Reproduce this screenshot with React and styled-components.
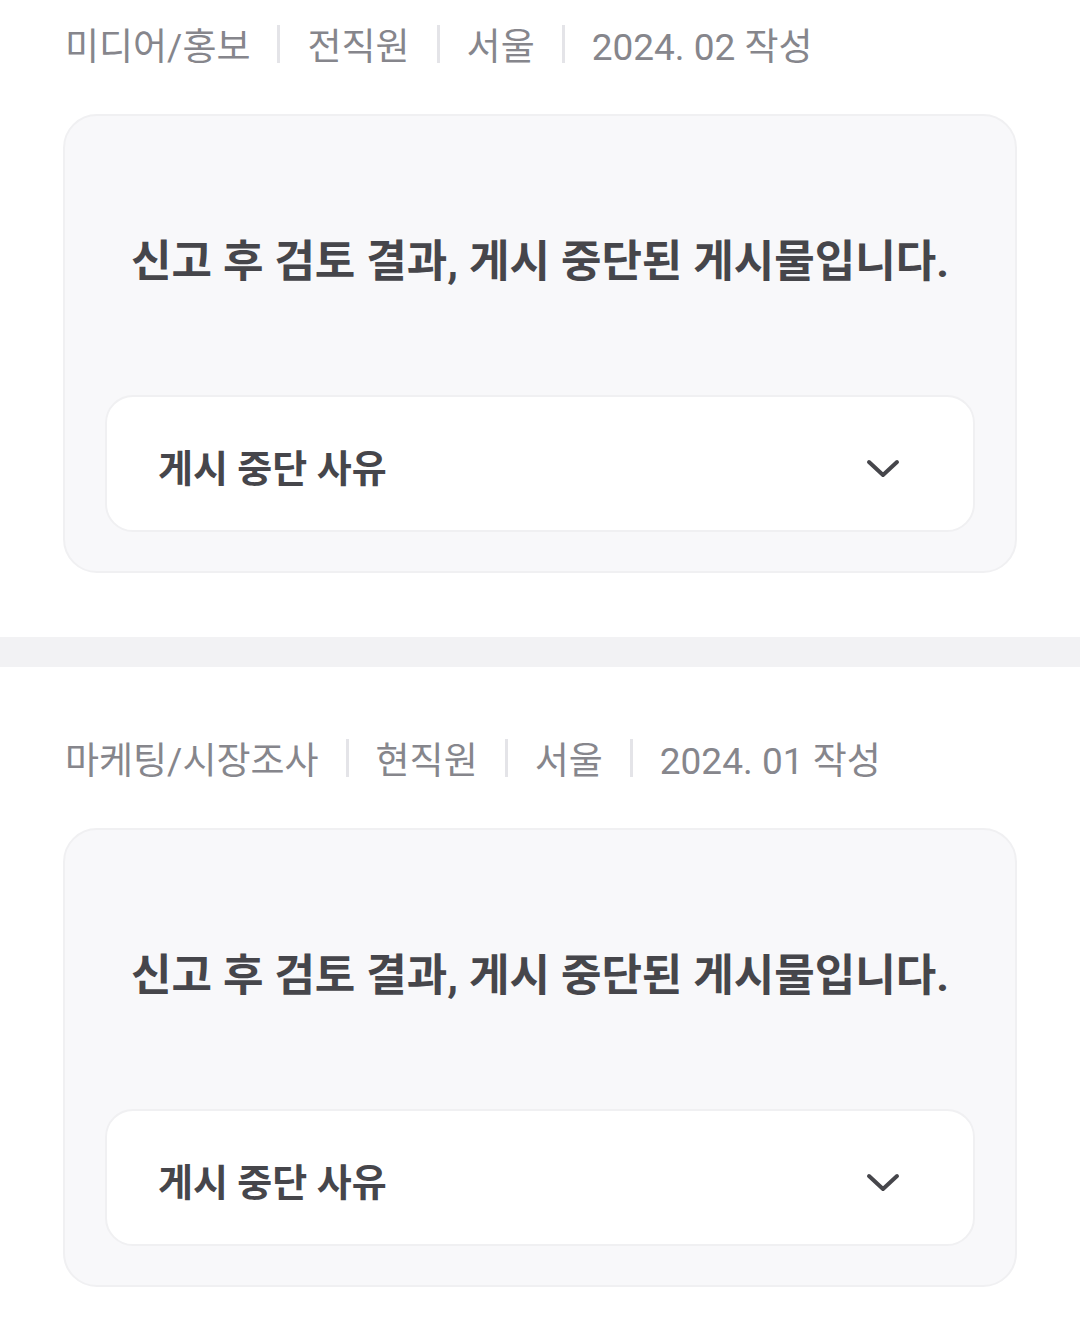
import React from 'react';
import styled, { createGlobalStyle } from 'styled-components';

const GlobalStyle = createGlobalStyle`
  body {
    margin: 0;
    background: #ffffff;
    font-family: "Roboto", "Noto Sans CJK KR", sans-serif;
  }
`;

const posts = [
  { job: '미디어/홍보', status: '전직원', region: '서울', date: '2024. 02 작성' },
  { job: '마케팅/시장조사', status: '현직원', region: '서울', date: '2024. 01 작성' },
];

function Chevron() {
  return (
    <ChevronIcon width="34" height="20" viewBox="0 0 34 20" fill="none">
      <path d="M3 3 L17 16 L31 3" stroke="#46464b" strokeWidth="4" strokeLinecap="round" strokeLinejoin="round" />
    </ChevronIcon>
  );
}

function Post({ post, first }) {
  return (
    <Section $first={first}>
      <Meta>
        <span>{post.job}</span>
        <Sep />
        <span>{post.status}</span>
        <Sep />
        <span>{post.region}</span>
        <Sep />
        <span>{post.date}</span>
      </Meta>
      <Card>
        <Notice>신고 후 검토 결과, 게시 중단된 게시물입니다.</Notice>
        <Reason>
          <ReasonLabel>게시 중단 사유</ReasonLabel>
          <Chevron />
        </Reason>
      </Card>
    </Section>
  );
}

export default function App() {
  return (
    <>
      <GlobalStyle />
      <Page>
        {posts.map((p, i) => (
          <React.Fragment key={i}>
            {i > 0 && <Band />}
            <Post post={p} first={i === 0} />
          </React.Fragment>
        ))}
      </Page>
    </>
  );
}

const Page = styled.div`
  display: flex;
  flex-direction: column;
`;

const Section = styled.section`
  padding: ${(p) => (p.$first ? '19px' : '66px')} 63px 64px;
  display: flex;
  flex-direction: column;
  gap: 45px;
`;

const Meta = styled.div`
  display: flex;
  align-items: center;
  height: 50px;
  padding-left: 2px;
  font-size: 37px;
  color: #86868c;
  gap: 27px;
`;

const Sep = styled.i`
  width: 3px;
  height: 38px;
  background: #e4e4e8;
`;

const Card = styled.div`
  background: #f8f8fa;
  border: 2px solid #f0f0f2;
  border-radius: 34px;
  padding: 118px 40px 39px;
  display: flex;
  flex-direction: column;
  align-items: stretch;
`;

const Notice = styled.div`
  text-align: center;
  font-size: 44px;
  font-weight: 700;
  line-height: 56px;
  color: #46464b;
  margin-bottom: 105px;
`;

const Reason = styled.div`
  height: 137px;
  box-sizing: border-box;
  background: #ffffff;
  border: 2px solid #f0f0f2;
  border-radius: 28px;
  display: flex;
  align-items: center;
  justify-content: space-between;
  padding: 4px 73px 0 51px;
`;

const ReasonLabel = styled.span`
  font-size: 38px;
  font-weight: 700;
  color: #46464b;
`;

const ChevronIcon = styled.svg`
  margin-top: 6px;
`;

const Band = styled.div`
  height: 30px;
  background: #f2f2f4;
`;
